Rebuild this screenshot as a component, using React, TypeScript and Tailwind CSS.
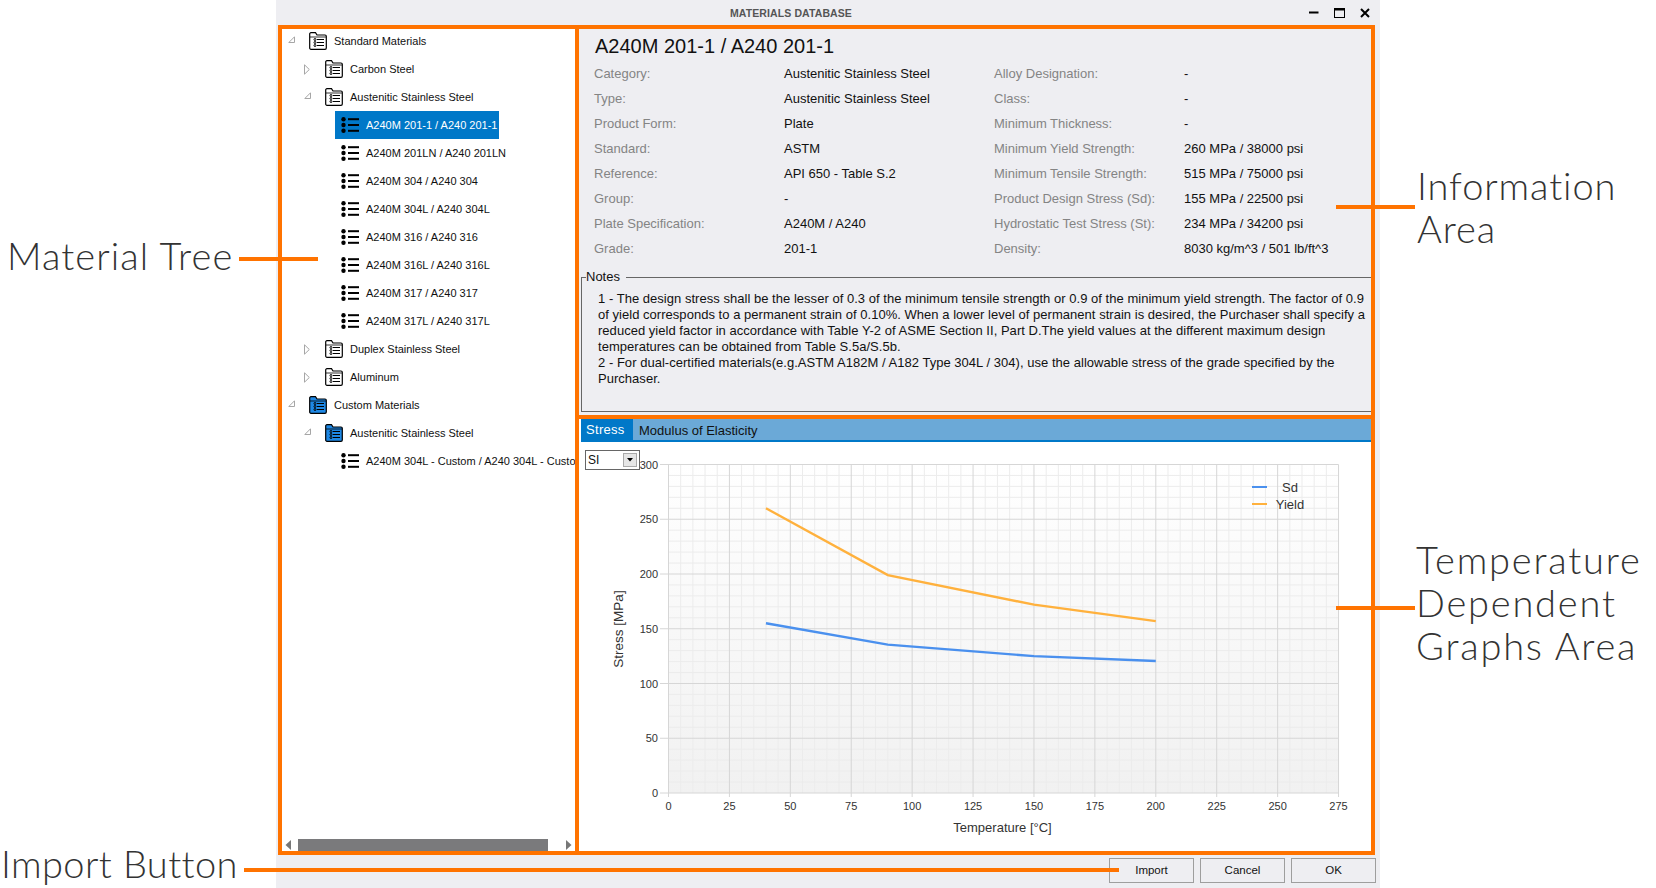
import React from "react";

const leftRows = [
  ["Category:", "Austenitic Stainless Steel", "Alloy Designation:", "-"],
  ["Type:", "Austenitic Stainless Steel", "Class:", "-"],
  ["Product Form:", "Plate", "Minimum Thickness:", "-"],
  ["Standard:", "ASTM", "Minimum Yield Strength:", "260 MPa / 38000 psi"],
  ["Reference:", "API 650 - Table S.2", "Minimum Tensile Strength:", "515 MPa / 75000 psi"],
  ["Group:", "-", "Product Design Stress (Sd):", "155 MPa / 22500 psi"],
  ["Plate Specification:", "A240M / A240", "Hydrostatic Test Stress (St):", "234 MPa / 34200 psi"],
  ["Grade:", "201-1", "Density:", "8030 kg/m^3 / 501 lb/ft^3"],
];

const notes = [
  "1 - The design stress shall be the lesser of 0.3 of the minimum tensile strength or 0.9 of the minimum yield strength. The factor of 0.9",
  "of yield corresponds to a permanent strain of 0.10%. When a lower level of permanent strain is desired, the Purchaser shall specify a",
  "reduced yield factor in accordance with Table Y-2 of ASME Section II, Part D.The yield values at the different maximum design",
  "temperatures can be obtained from Table S.5a/S.5b.",
  "2 - For dual-certified materials(e.g.ASTM A182M / A182 Type 304L / 304), use the allowable stress of the grade specified by the",
  "Purchaser.",
];

type TreeItem = {
  label: string;
  depth: 0 | 1 | 2;
  arrow?: "open" | "closed";
  blue?: boolean;
  selected?: boolean;
};

const tree: TreeItem[] = [
  { label: "Standard Materials", depth: 0, arrow: "open" },
  { label: "Carbon Steel", depth: 1, arrow: "closed" },
  { label: "Austenitic Stainless Steel", depth: 1, arrow: "open" },
  { label: "A240M 201-1 / A240 201-1", depth: 2, selected: true },
  { label: "A240M 201LN / A240 201LN", depth: 2 },
  { label: "A240M 304 / A240 304", depth: 2 },
  { label: "A240M 304L / A240 304L", depth: 2 },
  { label: "A240M 316 / A240 316", depth: 2 },
  { label: "A240M 316L / A240 316L", depth: 2 },
  { label: "A240M 317 / A240 317", depth: 2 },
  { label: "A240M 317L / A240 317L", depth: 2 },
  { label: "Duplex Stainless Steel", depth: 1, arrow: "closed" },
  { label: "Aluminum", depth: 1, arrow: "closed" },
  { label: "Custom Materials", depth: 0, arrow: "open", blue: true },
  { label: "Austenitic Stainless Steel", depth: 1, arrow: "open", blue: true },
  { label: "A240M 304L - Custom / A240 304L - Custom", depth: 2 },
];

const FolderIcon = ({ blue }: { blue?: boolean }) => (
  <svg width="18" height="18" viewBox="0 0 18 18" className="block">
    <path
      d="M0.7 16V2C0.7 1.2 1.2 0.7 2 0.7H6.5L8 3H16C16.8 3 17.3 3.5 17.3 4.3V16C17.3 16.8 16.8 17.3 16 17.3H2C1.2 17.3 0.7 16.8 0.7 16Z"
      fill={blue ? "#1e88e5" : "#fff"}
      stroke="#000"
      strokeWidth="1.2"
    />
    <path d="M1 5H17" stroke="#000" strokeWidth="0.8" />
    <g fill="none" stroke="#000" strokeWidth="1">
      <circle cx="6" cy="7.5" r="1" />
      <circle cx="6" cy="10.5" r="1" />
      <circle cx="6" cy="13.5" r="1" />
      <path d="M8 7.5H15M8 10.5H15M8 13.5H15" strokeWidth="1.2" />
    </g>
  </svg>
);

const ListIcon = () => (
  <svg width="18" height="16" viewBox="0 0 18 16" className="block">
    <g fill="#000">
      <circle cx="2.5" cy="2.3" r="2.2" />
      <circle cx="2.5" cy="8" r="2.2" />
      <circle cx="2.5" cy="13.7" r="2.2" />
      <rect x="7" y="1.2" width="11" height="2" />
      <rect x="7" y="7" width="11" height="2" />
      <rect x="7" y="12.8" width="11" height="2" />
    </g>
  </svg>
);

const Arrow = ({ kind }: { kind: "open" | "closed" }) =>
  kind === "open" ? (
    <svg width="7" height="7" viewBox="0 0 7 7" className="block -mt-[4px]">
      <path d="M6.5 0.8V6.5H0.8Z" fill="#fff" stroke="#a6a6a6" />
    </svg>
  ) : (
    <svg width="6" height="11" viewBox="0 0 6 11" className="block">
      <path d="M0.5 0.8L5.3 5.5L0.5 10.2Z" fill="#fff" stroke="#a6a6a6" />
    </svg>
  );

const TreeRow = ({ item }: { item: TreeItem }) => {
  if (item.depth === 2) {
    return (
      <div className="flex h-7 pl-[55px] items-center whitespace-nowrap">
        <div
          className={
            item.selected
              ? "flex h-7 items-center pl-[6px] pr-[2px] bg-[#0078c8] text-white"
              : "flex h-7 items-center pl-[6px] pr-[2px] text-[#111]"
          }
        >
          <span className="w-[25px] shrink-0">
            <ListIcon />
          </span>
          <span className="pt-px">{item.label}</span>
        </div>
      </div>
    );
  }
  return (
    <div
      className={
        item.depth === 0
          ? "flex h-7 pl-[8px] items-center whitespace-nowrap text-[#111]"
          : "flex h-7 pl-[24px] items-center whitespace-nowrap text-[#111]"
      }
    >
      <span className="w-[21px] shrink-0">{item.arrow && <Arrow kind={item.arrow} />}</span>
      <span className="w-[25px] shrink-0">
        <FolderIcon blue={item.blue} />
      </span>
      <span className="pt-px">{item.label}</span>
    </div>
  );
};

const px = (t: number) => 668.5 + t * 2.4365;
const py = (v: number) => 793 - v * 1.095;

const yieldLine = [[40, 260], [90, 199], [150, 172], [200, 157]];
const sdLine = [[40, 155], [90, 135.5], [150, 125], [200, 120.5]];
const toPoints = (d: number[][]) => d.map(([t, v]) => `${px(t)},${py(v)}`).join(" ");

const StressChart = () => {
  const xMajors = [0, 25, 50, 75, 100, 125, 150, 175, 200, 225, 250, 275];
  const yMajors = [0, 50, 100, 150, 200, 250, 300];
  const xMinors = Array.from({ length: 55 }, (_, i) => i * 5).filter((t) => t % 25 !== 0);
  const yMinors = Array.from({ length: 30 }, (_, i) => i * 10).filter((v) => v % 50 !== 0);
  return (
    <svg viewBox="577 442 796 413" width="796" height="413" className="block">
      <defs>
        <linearGradient id="plotBg" x1="0" y1="0" x2="0" y2="1">
          <stop offset="0" stopColor="#ffffff" />
          <stop offset="1" stopColor="#f1f1f1" />
        </linearGradient>
      </defs>
      <rect x={px(0)} y={py(300)} width={px(275) - px(0)} height={py(0) - py(300)} fill="url(#plotBg)" />
      {xMinors.map((t) => (
        <line key={t} x1={px(t)} x2={px(t)} y1={py(300)} y2={py(0)} stroke="#ececec" />
      ))}
      {yMinors.map((v) => (
        <line key={v} x1={px(0)} x2={px(275)} y1={py(v)} y2={py(v)} stroke="#ececec" />
      ))}
      {xMajors.map((t) => (
        <g key={t}>
          <line x1={px(t)} x2={px(t)} y1={py(300)} y2={797} stroke="#d6d6d6" />
          <text x={px(t)} y={810} textAnchor="middle" fontSize="11" fill="#333">
            {t}
          </text>
        </g>
      ))}
      {yMajors.map((v) => (
        <g key={v}>
          <line x1={660} x2={px(275)} y1={py(v)} y2={py(v)} stroke="#d6d6d6" />
          <text x={658} y={py(v) + 4} textAnchor="end" fontSize="11" fill="#333">
            {v}
          </text>
        </g>
      ))}
      <polyline points={toPoints(yieldLine)} fill="none" stroke="#ffb13d" strokeWidth="2.4" />
      <polyline points={toPoints(sdLine)} fill="none" stroke="#4a90ee" strokeWidth="2.4" />
      <line x1={1252} x2={1267} y1={487} y2={487} stroke="#4a90ee" strokeWidth="2" />
      <line x1={1252} x2={1267} y1={504} y2={504} stroke="#ffb13d" strokeWidth="2" />
      <text x={1290} y={492} textAnchor="middle" fontSize="13" fill="#333">
        Sd
      </text>
      <text x={1290} y={509} textAnchor="middle" fontSize="13" fill="#333">
        Yield
      </text>
      <text x={1002.5} y={832} textAnchor="middle" fontSize="13" fill="#333">
        Temperature [°C]
      </text>
      <text transform="translate(623 629) rotate(-90)" textAnchor="middle" fontSize="13.5" fill="#333">
        Stress [MPa]
      </text>
    </svg>
  );
};

const Callout = ({ className, lines }: { className: string; lines: string[] }) => (
  <div className={"absolute text-[38px] text-[#333] font-['Lato',sans-serif] font-light " + className}>
    {lines.map((l) => (
      <div key={l} className="h-[43px] leading-[43px] whitespace-nowrap">
        {l}
      </div>
    ))}
  </div>
);

const FooterButton = ({ label }: { label: string }) => (
  <button className="w-[85px] h-[25px] border border-[#9e9e9e] bg-[#eeeef2] text-[11.5px] text-[#111]">{label}</button>
);

export default function App() {
  return (
    <div className="relative w-[1656px] h-[888px] overflow-hidden bg-white font-['Liberation_Sans',Arial,sans-serif]">
      {/* dialog */}
      <div className="ml-[276px] w-[1104px] h-[888px] flex flex-col bg-[#eeeef2]">
        <div className="relative h-[27px] flex items-center shrink-0">
          <div className="pl-[454px] text-[10.5px] font-bold text-[#555] tracking-[0.1px]">MATERIALS DATABASE</div>
          <div className="ml-auto -mt-[1px] flex items-center gap-[15px] pr-[10px]">
            <svg width="10" height="10" viewBox="0 0 10 10" className="block">
              <rect x="0" y="3.5" width="9.5" height="2" fill="#000" />
            </svg>
            <svg width="11" height="10" viewBox="0 0 11 10" className="block">
              <rect x="0.5" y="0.5" width="10" height="9" fill="none" stroke="#000" />
              <rect x="0.5" y="0.5" width="10" height="2" fill="#000" />
            </svg>
            <svg width="10" height="10" viewBox="0 0 10 10" className="block">
              <path d="M1 1L9 9M9 1L1 9" stroke="#000" strokeWidth="2" />
            </svg>
          </div>
        </div>

        <div className="flex h-[828px] pl-[4px] shrink-0">
          {/* material tree */}
          <div className="w-[297px] flex flex-col bg-white text-[11px] overflow-hidden">
            <div className="flex-1 overflow-hidden">
              {tree.map((item, i) => (
                <TreeRow key={i} item={item} />
              ))}
            </div>
            <div className="h-3 mb-1 flex items-center pl-[5px]">
              <svg width="7" height="10" viewBox="0 0 7 10" className="block">
                <path d="M6 0V10L0.5 5Z" fill="#777" />
              </svg>
              <div className="ml-[6px] w-[250px] h-3 bg-[#7a7a7c]" />
              <svg width="7" height="10" viewBox="0 0 7 10" className="block ml-[17px]">
                <path d="M1 0V10L6.5 5Z" fill="#777" />
              </svg>
            </div>
          </div>

          <div className="w-[796px] flex flex-col">
            {/* information area */}
            <div className="h-[392px] shrink-0">
              <div className="h-[34px] pl-[18px] pt-[6px] text-[20px] leading-[26px] text-[#111]">
                A240M 201-1 / A240 201-1
              </div>
              <div className="pl-[17px]">
                {leftRows.map((r) => (
                  <div key={r[0]} className="grid grid-cols-[190px_210px_190px_1fr] h-[25px] items-center text-[13px] whitespace-nowrap">
                    <span className="text-[#848484]">{r[0]}</span>
                    <span className="text-[#111]">{r[1]}</span>
                    <span className="text-[#848484]">{r[2]}</span>
                    <span className="text-[#111]">{r[3]}</span>
                  </div>
                ))}
              </div>
              <fieldset className="ml-[4px] mt-[8px] h-[143px] border border-[#666] text-[#111]">
                <legend className="ml-[4px] pr-[6px] text-[13px] leading-[16px]">Notes</legend>
                <div className="pl-[16px] pt-[6px] text-[13px] leading-[16px] tracking-[0.03px] whitespace-nowrap">
                  {notes.map((n) => (
                    <div key={n}>{n}</div>
                  ))}
                </div>
              </fieldset>
            </div>

            {/* temperature dependent graphs area */}
            <div className="relative flex-1 bg-white overflow-hidden">
              <div className="ml-[4px] flex h-[23px] bg-[#6ba9d7] border-b-2 border-[#0078c8] text-[13px]">
                <div className="w-[52px] pl-[5px] bg-[#0078c8] text-white leading-[22px] tracking-[0.3px]">Stress</div>
                <div className="pl-[6px] text-[#111] leading-[23px]">Modulus of Elasticity</div>
              </div>
              <StressChart />
              <div className="absolute left-[8px] top-[31px] w-[55px] h-[20px] border border-[#666] bg-white flex items-center pl-[2px] text-[12px] text-[#111]">
                SI
                <div className="ml-auto mr-[2px] w-[14px] h-[14px] bg-[#e6e6e6] border border-[#aaa] flex items-center justify-center">
                  <svg width="6" height="4" viewBox="0 0 6 4" className="block">
                    <path d="M0 0H6L3 3.5Z" fill="#000" />
                  </svg>
                </div>
              </div>
            </div>
          </div>
        </div>

        <div className="flex-1 flex justify-end gap-[6px] pt-[3px] pr-[4px]">
          <FooterButton label="Import" />
          <FooterButton label="Cancel" />
          <FooterButton label="OK" />
        </div>
      </div>

      {/* orange annotations over the dialog */}
      <div className="absolute left-[278px] top-[25px] w-[1097px] h-[830px] border-4 border-[#ff7300]" />
      <div className="absolute left-[575px] top-[25px] w-1 h-[830px] bg-[#ff7300]" />
      <div className="absolute left-[575px] top-[415px] w-[800px] h-1 bg-[#ff7300]" />
      <div className="absolute left-[239px] top-[257px] w-[79px] h-1 bg-[#ff7300]" />
      <div className="absolute left-[1336px] top-[205px] w-[79px] h-1 bg-[#ff7300]" />
      <div className="absolute left-[1336px] top-[606px] w-[79px] h-1 bg-[#ff7300]" />
      <div className="absolute left-[244px] top-[868px] w-[875px] h-1 bg-[#ff7300]" />

      <Callout className="left-[7px] top-[234px] tracking-[1.1px]" lines={["Material Tree"]} />
      <Callout className="left-[1417px] top-[164px] tracking-[0.9px]" lines={["Information", "Area"]} />
      <Callout className="left-[1416px] top-[538px] tracking-[1.8px]" lines={["Temperature", "Dependent", "Graphs Area"]} />
      <Callout className="left-[1px] top-[842px] tracking-[0.4px]" lines={["Import Button"]} />
    </div>
  );
}
